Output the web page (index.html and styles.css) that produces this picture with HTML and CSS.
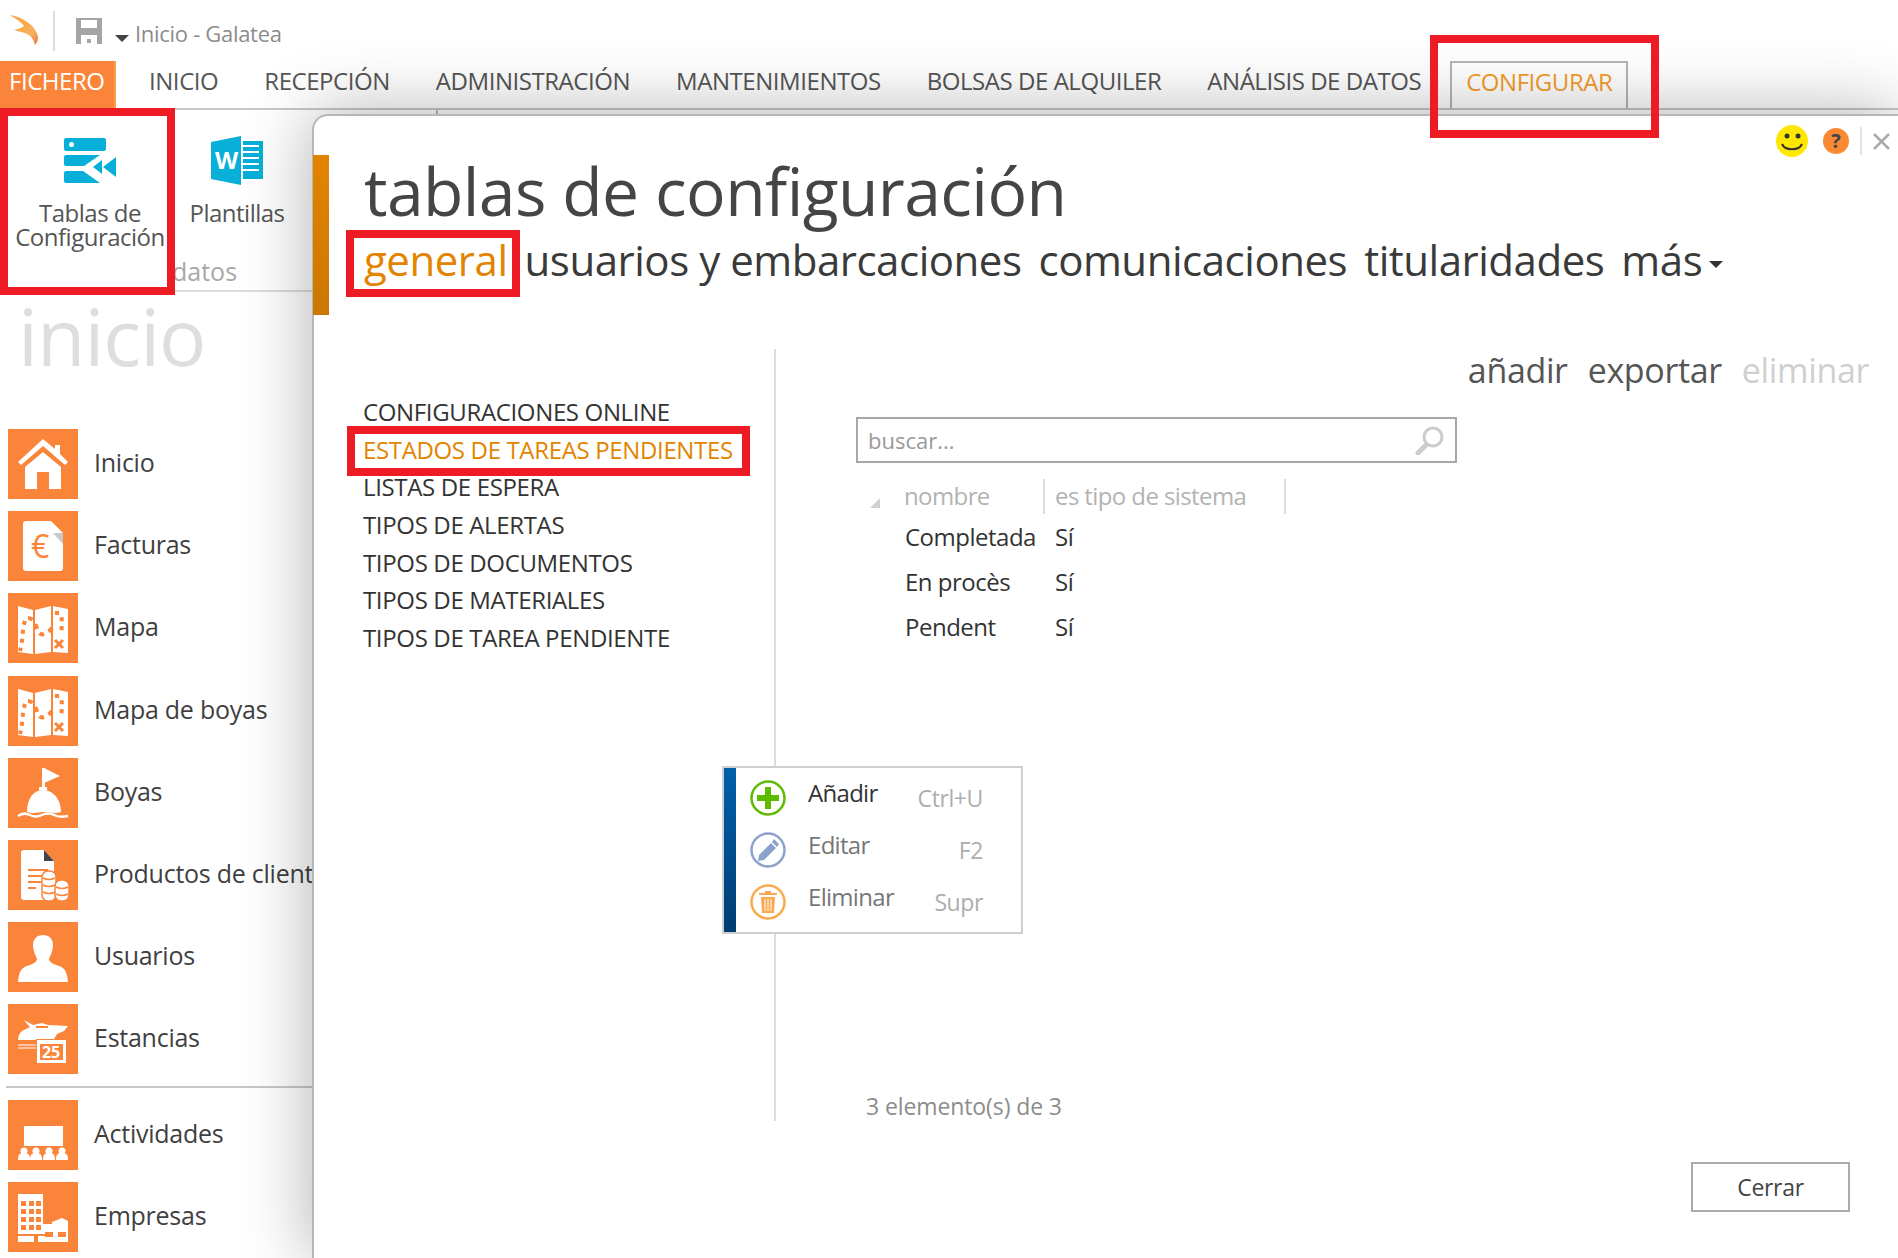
FILE: index.html
```html
<!DOCTYPE html>
<html lang="es">
<head>
<meta charset="utf-8">
<title>Inicio - Galatea</title>
<link rel="stylesheet" href="styles.css">
</head>
<body>
<svg class="defs" width="0" height="0">
  <symbol id="map" viewBox="0 0 70 70">
    <path fill="#fff" d="M10 13l15 4v44l-15-2zM27 17l16-4v46l-16 2zM45 13l15 3v44l-15-1z"/>
    <g fill="none" stroke="#f9843a" stroke-width="4">
      <path stroke-dasharray="4 5" d="M17 28c-3 8-2 20-5 30"/>
      <path stroke-dasharray="5 5" d="M20 25c6 0 8 8 10 13s8 5 15-4"/>
      <path stroke-dasharray="4 5" d="M47 20h4c4 3 3 12 2 22"/>
      <path stroke-width="3" d="M47 47l8 8M55 47l-8 8"/>
    </g>
  </symbol>
</svg>

<div class="app">
  <header class="titlebar">
    <svg class="logo" viewBox="0 0 30 32" width="30" height="32"><defs><linearGradient id="lg" x1="0" y1="0" x2="1" y2="1"><stop offset="0" stop-color="#f9a13c"/><stop offset=".7" stop-color="#f8b25e"/><stop offset="1" stop-color="#e8743a"/></linearGradient></defs><path fill="url(#lg)" d="M1 1C13 3 27 11 29 23c0 3-1 6-3 8-1-5-4-10-10-12-4-1-8-2-11-3 4-1 8-2 10-4C12 8 6 4 1 1z"/></svg>
    <span class="tb-sep"></span>
    <svg class="save" viewBox="0 0 26 26" width="26" height="26"><path fill="#a5a5a5" d="M0 0h26v26H0z"/><path fill="#fff" d="M5 2h16v8H5zM5 17h16v9H5z"/><path fill="#a5a5a5" d="M11 21h4v4h-4z"/></svg>
    <span class="caret"></span>
    <span class="tb-title">Inicio - Galatea</span>
  </header>

  <nav class="tabs">
    <span class="tab tab-file">FICHERO</span>
    <span class="tab">INICIO</span>
    <span class="tab">RECEPCIÓN</span>
    <span class="tab">ADMINISTRACIÓN</span>
    <span class="tab">MANTENIMIENTOS</span>
    <span class="tab">BOLSAS DE ALQUILER</span>
    <span class="tab">ANÁLISIS DE DATOS</span>
    <span class="tab tab-active">CONFIGURAR</span>
  </nav>

  <section class="ribbon">
    <div class="rb-btn rb-first">
      <svg viewBox="0 0 53 46" width="53" height="46"><g fill="#08afd9"><rect width="42" height="13" rx="2"/><path d="M2 17h34L20 28H2a2 2 0 0 1-2-2v-7a2 2 0 0 1 2-2zM2 33h17l17 12H2a2 2 0 0 1-2-2v-8a2 2 0 0 1 2-2zM29 29l9-7v14zM39 29l13-10v20z"/></g><circle cx="7.500" cy="6.500" r="2.500" fill="#fff"/></svg>
      <span>Tablas de<br>Configuración</span>
    </div>
    <div class="rb-btn rb-second">
      <svg viewBox="0 0 52 49" width="52" height="49"><path fill="#08afd9" d="M0 6l30-6v49L0 43z"/><text x="4" y="33" class="word-w">W</text><path fill="#08afd9" d="M32 5h20v38H32z"/><path fill="#fff" d="M32 9h16v2H32zM32 15h16v2H32zM32 21h16v2H32zM32 27h16v2H32zM32 33h16v2H32z"/></svg>
      <span>Plantillas</span>
    </div>
    <span class="rb-tick"></span>
    <span class="rb-group">datos</span>
  </section>

  <aside class="side">
    <h2 class="side-title">inicio</h2>
    <ul class="side-list">
      <li><span class="ico"><svg viewBox="0 0 70 70"><path fill="#fff" d="M35 10l12 10v-4h5v9l8 8-3 3-22-19-22 19-3-3z"/><path fill="#fff" d="M35 23l18 15v22H41V43H29v17H17V38z"/></svg></span>Inicio</li>
      <li><span class="ico"><svg viewBox="0 0 70 70"><path fill="#fff" d="M18 10h25l12 12v35a3 3 0 0 1-3 3H18a3 3 0 0 1-3-3V13a3 3 0 0 1 3-3z"/><path fill="#c8c8c8" d="M45 22h10v11z"/><text x="23" y="47" class="euro">€</text></svg></span>Facturas</li>
      <li class="tall"><span class="ico"><svg viewBox="0 0 70 70"><use href="#map"/></svg></span>Mapa</li>
      <li><span class="ico"><svg viewBox="0 0 70 70"><use href="#map"/></svg></span>Mapa de boyas</li>
      <li><span class="ico"><svg viewBox="0 0 70 70"><path fill="#fff" d="M34 10h3v19h2v3h-8v-3h3z"/><path fill="#fff" d="M36 10l16 8-16 7zM19 54c0-14 7-22 16-22s18 8 18 22c-6 2-11 0-17 0s-11 2-17 0z"/><path fill="none" stroke="#fff" stroke-width="2.500" d="M10 58c4-3 8-3 12-1s8 2 12 0 8-2 12 0 9 2 14 1"/></svg></span>Boyas</li>
      <li><span class="ico"><svg viewBox="0 0 70 70"><path fill="#fff" d="M16 10h20l10 11v39H16a3 3 0 0 1-3-3V13a3 3 0 0 1 3-3z"/><path fill="#444" d="M36 10l10 11H36z"/><path fill="#f9843a" d="M20 29h20v2H20zM20 35h17v2H20zM20 41h13v2H20zM20 47h8v2H20z"/><g fill="#fff" stroke="#f9843a" stroke-width="1.500"><rect x="34" y="31" width="14" height="30" rx="6"/><rect x="47" y="40" width="14" height="21" rx="6"/></g><path fill="none" stroke="#f9843a" stroke-width="1.500" d="M35 38c4 2 8 2 12 0M35 45c4 2 8 2 12 0M35 52c4 2 8 2 12 0M48 47c4 2 8 2 12 0M48 54c4 2 8 2 12 0"/></svg></span>Productos de clientes</li>
      <li><span class="ico"><svg viewBox="0 0 70 70"><path fill="#fff" d="M35 13c6 0 10 4 10 10s-3 11-4 14c0 3 4 5 10 7 6 2 8 6 9 16H10c1-10 3-14 9-16s10-4 10-7c-1-3-4-8-4-14s4-10 10-10z"/></svg></span>Usuarios</li>
      <li><span class="ico"><svg viewBox="0 0 70 70"><path fill="#fff" d="M16 16l9 5 9-2 6 2 20 1-4 5-7 3-3 5H28v1H10c0-5 3-9 6-10l6-3-2-2z"/><path fill="#f9843a" d="M28 22h12v2H28z"/><path fill="none" stroke="#fff" d="M10 41h18M10 44h18"/><path fill="#fff" d="M29 36h29v23H29z"/><path fill="#f9843a" d="M32 40h23v16H32z"/><text x="34" y="54" class="cal">25</text></svg></span>Estancias</li>
      <li class="side-sep"></li>
      <li><span class="ico"><svg viewBox="0 0 70 70"><path fill="#fff" d="M16 26h39v20H16z"/><g fill="#fff"><circle cx="16" cy="51" r="3.500"/><circle cx="28" cy="51" r="3.500"/><circle cx="41" cy="51" r="3.500"/><circle cx="54" cy="51" r="3.500"/><path d="M10 60c0-6 2-7 6-7s6 1 6 7zM22 60c0-6 2-7 6-7s6 1 6 7zM35 60c0-6 2-7 6-7s6 1 6 7zM48 60c0-6 2-7 6-7s6 1 6 7z"/></g></svg></span>Actividades</li>
      <li><span class="ico"><svg viewBox="0 0 70 70"><path fill="#fff" d="M10 12h25v48H10z"/><path fill="#fff" d="M30 42l14 0 0-2 10-4 6 3v21H30z"/><g fill="#f9843a"><path d="M13 19h5v5h-5zM21 19h5v5h-5zM28 19h5v5h-5zM13 27h5v5h-5zM21 27h5v5h-5zM28 27h5v5h-5zM13 35h5v5h-5zM21 35h5v5h-5zM28 35h5v5h-5zM13 43h5v5h-5zM21 43h5v5h-5zM28 43h5v5h-5zM10 52h30v2H10zM37 50h8v5h-8zM50 50h8v5h-8zM26 54h4v6h-4z"/></g></svg></span>Empresas</li>
    </ul>
  </aside>
</div>

<main class="window">
  <div class="win-top">
    <svg viewBox="0 0 32 32" width="32" height="32"><circle cx="16" cy="16" r="16" fill="#ffe800"/><circle cx="11" cy="11" r="2.500" fill="#333"/><circle cx="22" cy="11" r="2.500" fill="#333"/><path fill="none" stroke="#333" stroke-width="2" d="M6 19c3 7 17 7 20 0"/></svg>
    <span class="help">?</span>
    <span class="win-sep"></span>
    <svg viewBox="0 0 17 17" width="17" height="17"><path stroke="#aaa" stroke-width="2.500" d="M1 1l15 15M16 1L1 16"/></svg>
  </div>
  <span class="accent"></span>
  <h1 class="win-title">tablas de configuración</h1>
  <div class="pivots">
    <span class="pivot pivot-on">general</span>
    <span class="pivot">usuarios y embarcaciones</span>
    <span class="pivot">comunicaciones</span>
    <span class="pivot">titularidades</span>
    <span class="pivot">más</span><span class="more-caret"></span>
  </div>
  <div class="content">
    <ul class="cats">
      <li>CONFIGURACIONES ONLINE</li>
      <li class="cat-on">ESTADOS DE TAREAS PENDIENTES</li>
      <li>LISTAS DE ESPERA</li>
      <li>TIPOS DE ALERTAS</li>
      <li>TIPOS DE DOCUMENTOS</li>
      <li>TIPOS DE MATERIALES</li>
      <li>TIPOS DE TAREA PENDIENTE</li>
    </ul>
    <div class="pane">
      <div class="actions"><span>añadir</span><span>exportar</span><span class="off">eliminar</span></div>
      <div class="search"><span>buscar...</span>
        <svg viewBox="0 0 30 30" width="30" height="30"><circle cx="18" cy="12" r="9" fill="none" stroke="#ccc" stroke-width="3"/><path stroke="#ccc" stroke-width="5" stroke-linecap="round" d="M11 20l-8 8"/></svg>
      </div>
      <table class="grid">
        <thead><tr><th class="c-name"><i class="sort"></i>nombre</th><th class="c-sys">es tipo de sistema</th></tr></thead>
        <tbody>
          <tr><td class="c-name">Completada</td><td>Sí</td></tr>
          <tr><td class="c-name">En procès</td><td>Sí</td></tr>
          <tr><td class="c-name">Pendent</td><td>Sí</td></tr>
        </tbody>
      </table>
      <p class="count">3 elemento(s) de 3</p>
    </div>
  </div>
  <div class="win-foot"><span class="btn">Cerrar</span></div>

  <div class="menu">
    <div class="menu-row menu-first">
      <svg viewBox="0 0 36 36" width="36" height="36"><circle cx="18" cy="18" r="16.500" fill="#fff" stroke="#5dbb00" stroke-width="2.500"/><path fill="#5dbb00" d="M15 7h6v8h8v6h-8v8h-6v-8H7v-6h8z"/></svg>
      <span class="m-label">Añadir</span><span class="m-key">Ctrl+U</span>
    </div>
    <div class="menu-row">
      <svg viewBox="0 0 36 36" width="36" height="36"><circle cx="18" cy="18" r="16.500" fill="#fff" stroke="#8ba3cc" stroke-width="2.500"/><path fill="#8ba3cc" d="M24 7l5 5-2 3-5-5zM21 11l5 5-12 12-6 1 1-6z"/></svg>
      <span class="m-label">Editar</span><span class="m-key">F2</span>
    </div>
    <div class="menu-row">
      <svg viewBox="0 0 36 36" width="36" height="36"><circle cx="18" cy="18" r="16.500" fill="#fff" stroke="#fba94f" stroke-width="2.500"/><path fill="#fba94f" d="M15 7h6v2h6v2H9V9h6zM11 13h14l-1 16H12z"/><path stroke="#fff" d="M15 15v12M18 15v12M21 15v12"/></svg>
      <span class="m-label">Eliminar</span><span class="m-key">Supr</span>
    </div>
  </div>
</main>

<span class="mark mark-conf"></span>
<span class="mark mark-tablas"></span>
<span class="mark mark-general"></span>
<span class="mark mark-estados"></span>
</body>
</html>
```
FILE: styles.css
```css
* { box-sizing: border-box; }
html, body { margin: 0; height: 100%; overflow: hidden; background: #fff; }
body { position: relative; font-family: "Open Sans", "Noto Sans", sans-serif; font-stretch: 90%; color: #333; width: 1898px; height: 1258px; }
ul { list-style: none; margin: 0; padding: 0; }
.defs { position: absolute; }

.app { display: flex; flex-direction: column; height: 1258px; }

.titlebar { height: 61px; display: flex; align-items: center; padding-left: 9px; flex: none; }
.logo { margin-top: -1px; }
.tb-sep { width: 2px; height: 40px; background: #ddd; margin: 0 21px 0 14px; }
.caret { width: 0; height: 0; border: 7px solid transparent; border-top: 7px solid #444; border-bottom: 0; margin: 16px 6px 0 13px; }
.tb-title { font-size: 22px; color: #8c8c8c; letter-spacing: -.3px; padding-top: 4px; }

.tabs { height: 49px; display: flex; align-items: stretch; gap: 46px; border-bottom: 2px solid #c8c8c8; flex: none; font-size: 24px; line-height: 39px; color: #555; flex-shrink: 0; }
.tab { display: block; letter-spacing: -.45px; }
.tab-file { width: 116px; padding-left: 9px; background: #f9843a; color: #fff; border-right: 2px solid #f7a14a; margin-right: -13px; }
.tab-active { color: #f59b2b; border: 2px solid #b5b5b5; border-bottom: 0; padding: 0 14px; margin-left: -17px; height: 48px; line-height: 37px; }

.ribbon { height: 182px; display: flex; position: relative; border-bottom: 2px solid #dcdcdc; flex: none; }
.rb-btn { display: flex; flex-direction: column; align-items: center; text-align: center; font-size: 24px; line-height: 24px; color: #555; }
.rb-btn span { display: block; }
.rb-first { width: 180px; padding-top: 28px; }
.rb-first span { margin-top: 17px; letter-spacing: -.5px; }
.rb-second { width: 112px; padding-top: 26px; margin-left: 1px; }
.rb-second span { margin-top: 16px; letter-spacing: -.5px; }
.word-w { font: 700 24px "Open Sans", sans-serif; fill: #fff; }
.rb-tick { width: 2px; height: 6px; background: #bbb; margin-left: 143px; }
.rb-group { position: absolute; left: 172px; top: 144px; font-size: 25px; color: #a8a8a8; }

.side { flex: 1; min-height: 0; overflow: hidden; width: 312px; }
.side-title { margin: 0 0 0 18px; font-size: 79px; line-height: 88px; font-weight: 400; color: #dedede; height: 137px; letter-spacing: -1px; }
.side-list { font-size: 25px; color: #3f3f3f; letter-spacing: -.25px; display: flex; flex-direction: column; gap: 12px; }
.side-list li { display: flex; align-items: flex-start; height: 70px; line-height: 67px; white-space: nowrap; }
.side-list li.tall { height: 71px; }
.ico { width: 70px; height: 70px; background: #f9843a; margin: 0 16px 0 8px; flex: none; display: block; }
.ico svg { display: block; width: 70px; height: 70px; }
.side-list li.side-sep { height: 2px; background: #c8c8c8; margin: 0 0 0 6px; }
.euro { font: 400 32px "Open Sans", sans-serif; fill: #f9843a; }
.cal { font: 700 16px "Open Sans", sans-serif; fill: #fff; }

.window { position: absolute; left: 312px; top: 114px; width: 1586px; height: 1144px; background: #fff; border: solid #b7b7b7; border-width: 2px 0 0 2px; border-top-left-radius: 16px; box-shadow: 0 0 70px rgba(0,0,0,.32); padding-left: 50px; }
.win-top { position: absolute; right: 8px; top: 9px; display: flex; align-items: center; height: 32px; }
.help { width: 26px; height: 26px; border-radius: 50%; background: #f98a33; color: #444; font: 700 20px/26px "Open Sans", sans-serif; text-align: center; margin: 0 11px 0 15px; }
.win-sep { width: 2px; height: 28px; background: #e2e2e2; margin: 0 11px 0 0; }
.accent { position: absolute; left: -1px; top: 39px; width: 16px; height: 160px; background: linear-gradient(#e38400, #cb7700); }
.win-title { margin: 0; padding-top: 31px; font-size: 66px; line-height: 86px; font-weight: 400; color: #454545; letter-spacing: -.6px; height: 116px; }
.pivots { display: flex; align-items: center; font-size: 42px; line-height: 56px; color: #3a3a3a; gap: 17px; letter-spacing: -.47px; height: 56px; }
.pivot-on { color: #e38400; }
.more-caret { width: 0; height: 0; border: 7px solid transparent; border-top: 7px solid #333; border-bottom: 0; margin: 8px 0 0 -10px; }

.content { display: flex; margin-top: 61px; height: 772px; }
.cats { width: 413px; height: 100%; margin-left: -1px; border-right: 2px solid #dcdcdc; padding-top: 44px; font-size: 24px; line-height: 37.660px; color: #333; letter-spacing: -.35px; flex: none; }
.cat-on { color: #e38400; }
.pane { position: relative; flex: 1; padding-left: 80px; display: flex; flex-direction: column; min-width: 0; }
.actions { display: flex; justify-content: flex-end; gap: 20px; padding: 0 29px 0 0; height: 67px; margin-top: 1px; font-size: 34px; line-height: 40px; color: #555; letter-spacing: -.35px; }
.off { color: #cfcfcf; }
.search { width: 601px; height: 46px; flex: none; border: 2px solid #a8a8a8; display: flex; align-items: center; justify-content: space-between; padding: 0 10px 0 10px; font-size: 22px; color: #999; }
.grid { border-collapse: collapse; table-layout: fixed; width: 429px; align-self: flex-start; margin-top: 16px; font-size: 24px; letter-spacing: -.5px; color: #333; }
.grid th { font-weight: 400; text-align: left; color: #b3b3b3; height: 34px; padding: 0 0 2px; letter-spacing: -.6px; white-space: nowrap; }
.grid td { height: 45px; padding: 0 0 0 11px; white-space: nowrap; }
.grid td.c-name { padding-left: 49px; }
.grid th.c-name { padding-left: 48px; width: 188px; border-right: 2px solid #dcdcdc; position: relative; }
.grid th.c-sys { padding-left: 10px; width: 241px; border-right: 2px solid #dcdcdc; }
.sort { position: absolute; left: 14px; bottom: 6px; width: 0; height: 0; border: solid transparent; border-width: 0 0 10px 10px; border-bottom-color: #cfcfcf; }
.count { position: absolute; left: 90px; top: 741px; margin: 0; font-size: 23px; color: #8c8c8c; letter-spacing: -.1px; }
.win-foot { display: flex; justify-content: flex-end; padding: 41px 48px 0 0; }
.btn { width: 159px; height: 50px; border: 2px solid #aaa; text-align: center; font-size: 23px; line-height: 46px; color: #444; letter-spacing: -.3px; }

.menu { position: absolute; left: 408px; top: 650px; width: 301px; height: 168px; border: 2px solid #cfcfcf; background: #fff; padding: 12px 0 0 26px; display: flex; flex-direction: column; gap: 16px; font-size: 24px; letter-spacing: -.7px; }
.menu::before { content: ""; position: absolute; left: 0; top: 0; bottom: 0; width: 12px; background: linear-gradient(#0060aa, #003d73); }
.menu-row { display: flex; align-items: center; height: 36px; color: #777; }
.menu-first { color: #333; }
.m-label { margin-left: 22px; margin-top: -11px; }
.m-key { margin-left: auto; margin-right: 38px; color: #adadad; font-size: 23px; letter-spacing: -.4px; }

.mark { position: absolute; border: 8px solid #ed1c24; pointer-events: none; display: block; }
.mark-conf { left: 1430px; top: 35px; width: 229px; height: 103px; }
.mark-tablas { left: 0; top: 108px; width: 175px; height: 187px; }
.mark-general { left: 346px; top: 230px; width: 174px; height: 67px; }
.mark-estados { left: 347px; top: 426px; width: 403px; height: 50px; }
```
